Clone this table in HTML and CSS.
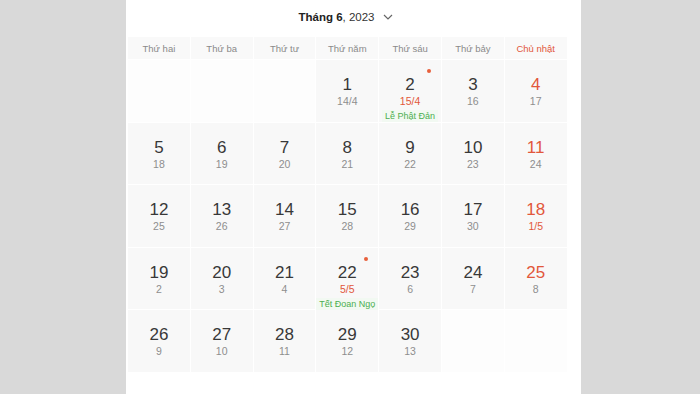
FILE: index.html
```html
<!DOCTYPE html>
<html lang="vi">
<head>
<meta charset="utf-8">
<link rel="stylesheet" href="styles.css">
</head>
<body>
<div class="panel">
  <div class="header"><b>Tháng 6</b>, 2023
    <svg class="chev" width="10" height="6" viewBox="0 0 10 6"><path d="M1 1 L5 5 L9 1" fill="none" stroke="#666" stroke-width="1.2"/></svg>
  </div>
  <div class="grid">
    <div class="wd">Thứ hai</div><div class="wd">Thứ ba</div><div class="wd">Thứ tư</div><div class="wd">Thứ năm</div><div class="wd">Thứ sáu</div><div class="wd">Thứ bảy</div><div class="wd sun">Chủ nhật</div>

    <div class="cell empty"></div><div class="cell empty"></div><div class="cell empty"></div>
    <div class="cell"><span class="d">1</span><span class="l">14/4</span></div>
    <div class="cell"><i class="dot"></i><span class="d">2</span><span class="l red">15/4</span><span class="h">Lễ Phật Đản</span></div>
    <div class="cell"><span class="d">3</span><span class="l">16</span></div>
    <div class="cell"><span class="d red">4</span><span class="l">17</span></div>

    <div class="cell"><span class="d">5</span><span class="l">18</span></div>
    <div class="cell"><span class="d">6</span><span class="l">19</span></div>
    <div class="cell"><span class="d">7</span><span class="l">20</span></div>
    <div class="cell"><span class="d">8</span><span class="l">21</span></div>
    <div class="cell"><span class="d">9</span><span class="l">22</span></div>
    <div class="cell"><span class="d">10</span><span class="l">23</span></div>
    <div class="cell"><span class="d red">11</span><span class="l">24</span></div>

    <div class="cell"><span class="d">12</span><span class="l">25</span></div>
    <div class="cell"><span class="d">13</span><span class="l">26</span></div>
    <div class="cell"><span class="d">14</span><span class="l">27</span></div>
    <div class="cell"><span class="d">15</span><span class="l">28</span></div>
    <div class="cell"><span class="d">16</span><span class="l">29</span></div>
    <div class="cell"><span class="d">17</span><span class="l">30</span></div>
    <div class="cell"><span class="d red">18</span><span class="l red">1/5</span></div>

    <div class="cell"><span class="d">19</span><span class="l">2</span></div>
    <div class="cell"><span class="d">20</span><span class="l">3</span></div>
    <div class="cell"><span class="d">21</span><span class="l">4</span></div>
    <div class="cell"><i class="dot"></i><span class="d">22</span><span class="l red">5/5</span><span class="h">Tết Đoan Ngọ</span></div>
    <div class="cell"><span class="d">23</span><span class="l">6</span></div>
    <div class="cell"><span class="d">24</span><span class="l">7</span></div>
    <div class="cell"><span class="d red">25</span><span class="l">8</span></div>

    <div class="cell"><span class="d">26</span><span class="l">9</span></div>
    <div class="cell"><span class="d">27</span><span class="l">10</span></div>
    <div class="cell"><span class="d">28</span><span class="l">11</span></div>
    <div class="cell"><span class="d">29</span><span class="l">12</span></div>
    <div class="cell"><span class="d">30</span><span class="l">13</span></div>
    <div class="cell empty"></div><div class="cell empty"></div>
  </div>
</div>
</body>
</html>
```
FILE: styles.css
```css
html, body { margin: 0; padding: 0; }
body {
  background: #d9d9d9;
  font-family: "Liberation Sans", Arial, sans-serif;
  height: 394px;
  overflow: hidden;
}
.panel {
  margin-left: 126px;
  width: 455px;
  height: 394px;
  background: #fff;
}
.header {
  height: 37px;
  display: flex;
  align-items: center;
  justify-content: center;
  font-size: 11.5px;
  color: #333;
  padding-right: 16px;
  box-sizing: border-box;
  padding-bottom: 3px;
}
.header b { color: #222; }
.chev { margin-left: 8px; }
.grid {
  margin-left: 2px;
  width: 440px;
  display: grid;
  grid-template-columns: repeat(7, 61.8px);
  grid-template-rows: 22px repeat(5, 61.6px);
  gap: 1px;
  background: #fff;
}
.wd {
  background: #f9f9f9;
  font-size: 9.5px;
  color: #8a8a8a;
  display: flex;
  align-items: center;
  justify-content: center;
}
.wd.sun { color: #e2573b; }
.cell {
  position: relative;
  background: #f8f8f8;
  display: flex;
  flex-direction: column;
  align-items: center;
  padding-top: 15px;
  box-sizing: border-box;
}
.cell.empty { background: #fdfdfd; }
.d {
  font-size: 17px;
  line-height: 20px;
  color: #383838;
}
.l {
  font-size: 10.5px;
  line-height: 12px;
  color: #8e8e8e;
}
.red { color: #e2573b; }
.h {
  margin-top: 3px;
  font-size: 9px;
  line-height: 12px;
  color: #4caf50;
  background: #f2f9f2;
  padding: 0 3px;
  white-space: nowrap;
}
.dot {
  position: absolute;
  top: 9px;
  right: 10px;
  width: 4px;
  height: 4px;
  border-radius: 50%;
  background: #e8603c;
}
```
